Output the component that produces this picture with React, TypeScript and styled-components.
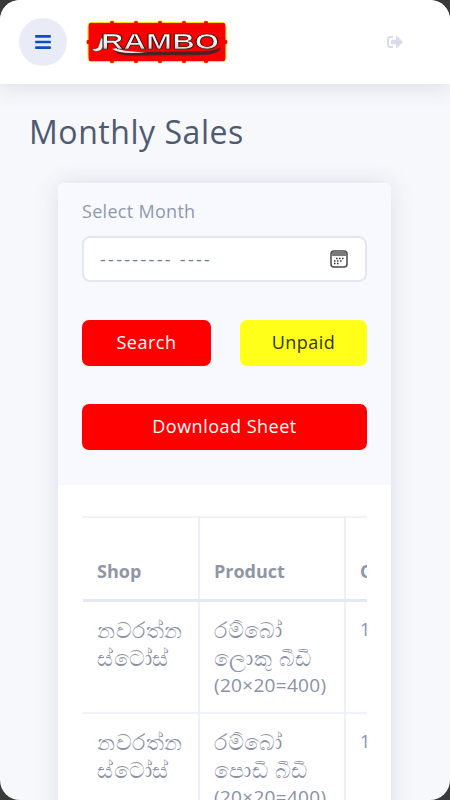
import React from 'react';
import styled, { createGlobalStyle } from 'styled-components';
import { FaBars, FaSignOutAlt } from 'react-icons/fa';

const GlobalStyle = createGlobalStyle`
  html, body {
    margin: 0;
    padding: 0;
    width: 450px;
    height: 800px;
    overflow: hidden;
    background: #3a3a3a;
  }
  * {
    box-sizing: border-box;
  }
`;

const Screen = styled.div`
  width: 450px;
  height: 800px;
  overflow: hidden;
  background: #f6f8fc;
  border-radius: 20px;
  font-family: "Open Sans", "Noto Sans", sans-serif;
  color: #525f7f;
`;

const TopBar = styled.header`
  height: 84px;
  display: flex;
  align-items: center;
  padding: 0 47px 0 19px;
  background: #fff;
  box-shadow: 0 4px 20px rgba(60, 70, 100, 0.14);
`;

const MenuButton = styled.button`
  width: 48px;
  height: 48px;
  display: flex;
  align-items: center;
  justify-content: center;
  border: none;
  border-radius: 50%;
  background: #e9ecf6;
  color: #0b4fc4;
  font-size: 18px;
  padding: 0;
`;

const Logo = styled.svg`
  display: block;
  width: 142px;
  height: 44px;
  margin-left: 19px;
`;

const LogoutIcon = styled(FaSignOutAlt)`
  margin-left: auto;
  color: #d8dcea;
  font-size: 16px;
`;

const Content = styled.main`
  padding: 28px 59px 0 58px;
`;

const Title = styled.h1`
  margin: 0 0 31px -29px;
  font-size: 32px;
  line-height: 40px;
  font-weight: 400;
  letter-spacing: 0.55px;
  color: #4e5a72;
`;

const Card = styled.section`
  border-radius: 6px 6px 0 0;
  background: #fff;
  box-shadow: 0 0 24px rgba(60, 70, 100, 0.14);
`;

const CardHeader = styled.div`
  height: 302px;
  padding: 16px 24px 0;
  border-radius: 6px 6px 0 0;
  background: #f8f9fe;
`;

const FieldLabel = styled.div`
  margin-bottom: 13px;
  font-size: 18px;
  line-height: 24px;
  letter-spacing: 0.3px;
  color: #8f99ad;
`;

const MonthField = styled.div`
  display: flex;
  align-items: center;
  justify-content: space-between;
  height: 46px;
  padding: 0 16px;
  border: 2px solid #e4e7f2;
  border-radius: 8px;
  background: #fff;
  font-size: 18px;
  color: #6b7f9f;
`;

const MonthPlaceholder = styled.span`
  letter-spacing: 2.3px;
`;

const CalendarIcon = styled.svg`
  display: block;
  width: 18px;
  height: 18px;
  margin-right: 1px;
`;

const ButtonRow = styled.div`
  display: grid;
  grid-template-columns: 129px 127px;
  justify-content: space-between;
  margin-top: 38px;
`;

const ActionButton = styled.button<{ $tone: 'red' | 'yellow' }>`
  display: block;
  width: 100%;
  height: 46px;
  padding: 0 0 2px;
  border: none;
  border-radius: 7px;
  font-family: inherit;
  font-size: 18px;
  letter-spacing: 0.5px;
  background: ${({ $tone }) => ($tone === 'red' ? '#ff0000' : '#ffff19')};
  color: ${({ $tone }) => ($tone === 'red' ? '#fff' : '#33380a')};
`;

const DownloadRow = styled.div`
  margin-top: 38px;
`;

const CardBody = styled.div`
  padding: 31px 24px 0 25px;
  background: #fff;
`;

const TableClip = styled.div`
  overflow: hidden;
`;

const Table = styled.table`
  width: 420px;
  table-layout: fixed;
  border-collapse: collapse;
  font-size: 18px;
  color: #8b92a6;
`;

const HeadCell = styled.th<{ $width: number }>`
  width: ${({ $width }) => $width}px;
  height: 83px;
  padding: 26px 14px 0;
  border-top: 2px solid #f0f2f8;
  border-right: 2px solid #eef0f7;
  border-bottom: 3px solid #e4e8f2;
  text-align: left;
  font-size: 18px;
  font-weight: 700;
  color: #8f96a8;
`;

const BodyCell = styled.td`
  padding: 13px 14px 13px;
  border-right: 2px solid #eef0f7;
  border-bottom: 2px solid #f0f2f8;
  vertical-align: top;
  line-height: 28px;
`;

const CellLine = styled.span<{ $sinhala?: boolean }>`
  display: block;
  white-space: nowrap;
  font-size: ${({ $sinhala }) => ($sinhala ? '22px' : '19px')};
  letter-spacing: ${({ $sinhala }) => ($sinhala ? '0.6px' : '0.3px')};
`;

const sales = [
  { shop: ['නවරත්න', 'ස්ටෝස්'], product: ['රම්බෝ', 'ලොකු බීඩි'], pack: '(20×20=400)', qty: '1' },
  { shop: ['නවරත්න', 'ස්ටෝස්'], product: ['රම්බෝ', 'පොඩි බීඩි'], pack: '(20×20=400)', qty: '1' },
];

// scallops around the logo plate, x/y in the svg's own units
const plateBumps = [
  [5, 5], [26, 3.2], [50, 3.2], [74, 3.2], [98, 3.2], [120, 3.2], [137, 5],
  [5, 39], [26, 40.8], [50, 40.8], [74, 40.8], [98, 40.8], [120, 40.8], [137, 39],
  [2.8, 22], [139.2, 22],
];

function RamboLogo() {
  return (
    <Logo viewBox="0 0 142 44" role="img" aria-label="Rambo">
      <defs>
        <filter id="soft" x="-5%" y="-10%" width="110%" height="120%">
          <feGaussianBlur stdDeviation="0.55" />
        </filter>
        <linearGradient id="chrome" x1="0" y1="0" x2="0" y2="1">
          <stop offset="0" stopColor="#ffffff" />
          <stop offset="0.6" stopColor="#eeeeee" />
          <stop offset="1" stopColor="#a8a8a8" />
        </linearGradient>
      </defs>
      <g filter="url(#soft)">
        <rect x="1.5" y="2" width="139" height="40" rx="5" fill="#f7e300" />
        {plateBumps.map(([cx, cy]) => (
          <circle key={`y${cx}-${cy}`} cx={cx} cy={cy} r="2.6" fill="#f7e300" />
        ))}
        <rect x="2.6" y="3.1" width="136.8" height="37.8" rx="4" fill="#f80000" />
        {plateBumps.map(([cx, cy]) => (
          <circle key={`r${cx}-${cy}`} cx={cx} cy={cy} r="2.2" fill="#f80000" />
        ))}
        <path d="M6 28.5 Q9 29.5 12 27.5 L15 18 L17 18 L17 27 Q15 31.5 10 31.5 Q7 31.5 6 28.5 Z" fill="#eeeeee" stroke="#3a1010" strokeWidth="0.5" />
        <path d="M28 31 Q40 33 62 32 L120 31 Q130 30.5 135 27 L133 31 Q128 34.5 118 35 L44 35.5 Q34 35.5 28 31 Z" fill="#4e2222" />
        <path d="M26 29 Q32 33 46 33 L60 32.6 L46 31.5 Q36 31 31 28 Z" fill="#eeeeee" />
        <text
          x="15"
          y="29"
          textLength="118"
          lengthAdjust="spacingAndGlyphs"
          fontFamily="'Liberation Sans', sans-serif"
          fontSize="22"
          fontWeight="700"
          fill="url(#chrome)"
          stroke="#2a0c0c"
          strokeWidth="0.7"
        >
          RAMBO
        </text>
      </g>
    </Logo>
  );
}

export default function App() {
  return (
    <Screen>
      <GlobalStyle />
      <TopBar>
        <MenuButton aria-label="Menu">
          <FaBars />
        </MenuButton>
        <RamboLogo />
        <LogoutIcon />
      </TopBar>
      <Content>
        <Title>Monthly Sales</Title>
        <Card>
          <CardHeader>
            <FieldLabel>Select Month</FieldLabel>
            <MonthField>
              <MonthPlaceholder>--------- ----</MonthPlaceholder>
              <CalendarIcon viewBox="0 0 18 18">
                <rect x="1" y="1" width="16" height="16" rx="3" fill="#fff" stroke="#4a4a4a" strokeWidth="1.5" />
                <path d="M1.5 4 Q1.5 1.5 4 1.5 H14 Q16.5 1.5 16.5 4 V6 H1.5 Z" fill="#7a7a7a" />
                <path d="M6 8.5h1.5M9 8.5h1.5M12 8.5h1.5M4 11h1.5M7 11h1.5M10 11h1.5M4 13.5h1.5M7 13.5h1.5" stroke="#333" strokeWidth="1.3" />
              </CalendarIcon>
            </MonthField>
            <ButtonRow>
              <ActionButton $tone="red">Search</ActionButton>
              <ActionButton $tone="yellow">Unpaid</ActionButton>
            </ButtonRow>
            <DownloadRow>
              <ActionButton $tone="red">Download Sheet</ActionButton>
            </DownloadRow>
          </CardHeader>
          <CardBody>
            <TableClip>
              <Table>
                <thead>
                  <tr>
                    <HeadCell $width={116}>Shop</HeadCell>
                    <HeadCell $width={146}>Product</HeadCell>
                    <HeadCell $width={158}>Qty</HeadCell>
                  </tr>
                </thead>
                <tbody>
                  {sales.map((row) => (
                    <tr key={row.product[1]}>
                      <BodyCell>
                        {row.shop.map((line) => (
                          <CellLine key={line} $sinhala>{line}</CellLine>
                        ))}
                      </BodyCell>
                      <BodyCell>
                        {row.product.map((line) => (
                          <CellLine key={line} $sinhala>{line}</CellLine>
                        ))}
                        <CellLine>{row.pack}</CellLine>
                      </BodyCell>
                      <BodyCell>{row.qty}</BodyCell>
                    </tr>
                  ))}
                </tbody>
              </Table>
            </TableClip>
          </CardBody>
        </Card>
      </Content>
    </Screen>
  );
}
